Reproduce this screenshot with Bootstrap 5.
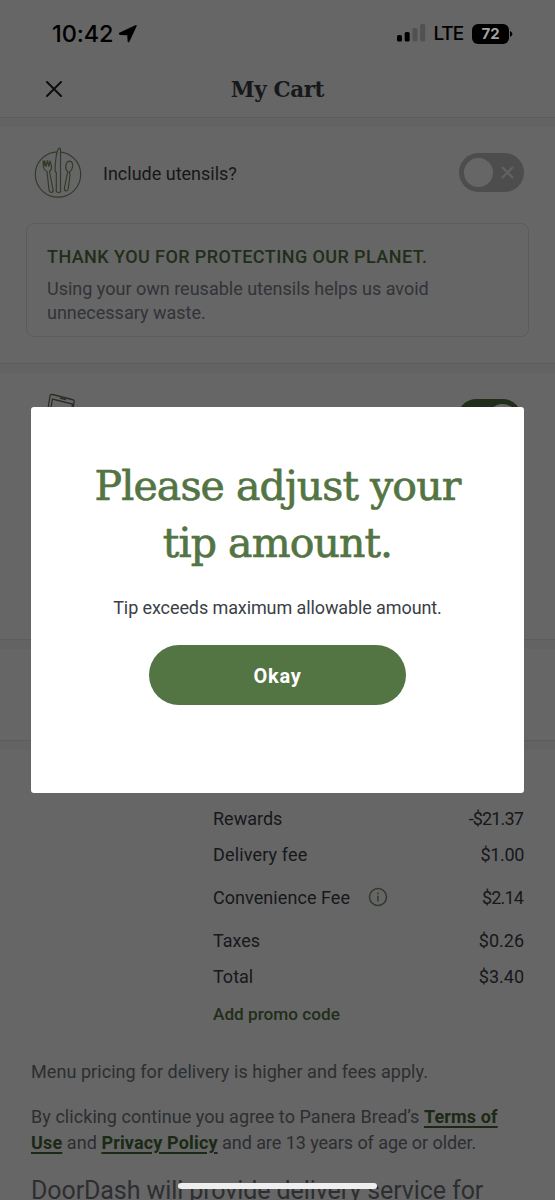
<!DOCTYPE html>
<html lang="en">
<head>
<meta charset="utf-8">
<meta name="viewport" content="width=device-width, initial-scale=1">
<title>My Cart</title>
<link href="https://cdn.jsdelivr.net/npm/bootstrap@5.3.0/dist/css/bootstrap.min.css" rel="stylesheet">
<style>
body{font-family:Roboto,"Liberation Sans",sans-serif;background:#fff;color:#3b3e46;font-size:18px;line-height:24px}
.phone{width:555px;height:1200px}
.status{height:62px;z-index:30;color:#000;font-family:Inter,sans-serif;padding:5px 42px 0 52px}
.clock{font-size:23.5px;font-weight:500;letter-spacing:-.1px}
.lte{font-size:19px;font-weight:500;letter-spacing:-1.1px;margin-left:7px}
.battery{width:37px;height:20px;border-radius:6px;background:#000;color:#a2a2a2;font-size:15px;font-weight:700;line-height:20px}
.topbar{margin-top:62px;height:55px}
.slab{font-family:"DejaVu Serif",serif}
.cart-title{font-size:21.5px;font-weight:700;line-height:30px;letter-spacing:-.4px;color:#3b3e46}
.close-x{left:46px;top:19px}
.band{height:10px;background:#f7f7f7;border-top:1px solid #e6e6e6;flex:none}
.green{color:#537443}
.toggle{width:65px;height:39px;border-radius:20px;background:#c0c0c0;padding:5px}
.toggle.is-on{background:#537443;margin-top:6px}
.toggle .knob{width:29px;height:29px;border-radius:50%;background:#fff}
.utensils{height:236px;padding:17px 31px 0}
.utensils-label{margin-left:18px;padding-top:3px}
.note{margin:23px -5px 0;height:114px;border:1.5px solid #e4e4e4;border-radius:8px;padding:21px 20px 0;color:#7d818c}
.note-title{font-weight:500;letter-spacing:.42px}
.summary{margin-left:213px;margin-right:31px;padding-top:57px}
.promo{font-weight:500;letter-spacing:0;font-size:17.2px;margin-top:13px}
.snug{letter-spacing:-.35px}
.snugger{letter-spacing:-.85px;margin-right:1px}
.legal{padding:0 31px;color:#70747c;margin-top:34px;letter-spacing:.06px}
.legal a{color:#466a35;font-weight:700;text-decoration-thickness:2px;text-underline-offset:3px;letter-spacing:.15px}
.age{letter-spacing:-.06px}
.door{font-size:25px;line-height:30px;white-space:nowrap;letter-spacing:-.09px}
.shade{background:rgba(0,0,0,.6);z-index:10}
.dialog-layer{z-index:20;padding:407px 31px 0}
.dialog-box{height:386px;border-radius:3px;border:0;padding-top:51px}
.dialog-title{font-size:41px;line-height:57px;font-weight:400;color:#537443;letter-spacing:-.9px;-webkit-text-stroke:.7px #537443}
.dialog-text{margin-top:24px;letter-spacing:-.1px}
.okay{width:257px;height:60px;background:#537443;color:#fff;font-weight:700;font-size:20px;letter-spacing:.7px;margin-top:25px;padding-top:8px}
.home{left:178px;top:1183px;width:199px;height:6px;z-index:30;background:#eee}
</style>
</head>
<body>
<main class="phone position-relative overflow-hidden">
  <div class="status position-absolute top-0 start-0 w-100 d-flex align-items-center">
    <span class="clock">10:42</span>
    <svg style="margin-left:5px" width="20" height="20" viewBox="0 0 20 20"><path d="M1.300 8.700 17.300 1.200q1.800-.6 1.200 1.200L11.500 17.600q-1.300 1.800-1.900-.3L9.300 11.200 2.500 10.900q-2.600-.6-1.200-2.200Z" fill="#000"/></svg>
    <svg class="ms-auto" width="29" height="19" viewBox="0 0 29 19"><g fill="#000"><rect y="11" width="5" height="6.500" rx="1.500"/><rect x="7.700" y="8" width="5" height="9.500" rx="1.500"/></g><g fill="#515151"><rect x="15.500" y="4" width="5" height="13.500" rx="1.500"/><rect x="23.200" y="0" width="5" height="17.500" rx="1.500"/></g></svg>
    <span class="lte">LTE</span>
    <span class="battery text-center" style="margin-left:9px">72</span>
    <svg width="4" height="8" viewBox="0 0 4 8"><path d="M1 1q5 3 0 6Z"/></svg>
  </div>

  <header class="topbar position-relative d-flex justify-content-center align-items-center">
    <svg class="close-x position-absolute" width="16" height="16" viewBox="0 0 16 16"><path d="M1 1 15 15M15 1 1 15" stroke="#202226" stroke-width="2" stroke-linecap="round"/></svg>
    <h1 class="cart-title slab mb-0">My Cart</h1>
  </header>
  <div class="band"></div>

  <section class="utensils">
    <div class="d-flex align-items-center">
      <svg width="54" height="56" viewBox="0 0 54 56" fill="none" stroke="#7c9469" stroke-width="1.200" stroke-linejoin="round">
        <circle cx="27" cy="30.500" r="22.700"/>
        <path fill="#fff" d="M25.300 46V28.500L24 27Q24.500 11 27 5.500 28.500 3 29.500 5V46Q30.500 48.500 27.500 48.500 24.800 48.500 25.300 46Z"/>
        <path fill="#fff" d="M12 17 12.500 23.500Q13 26 16 27.500L18 46Q18.500 48.500 20.500 48.500 22.500 48 22 45.500L18.500 27.500Q21 25.500 20.500 22L19 17 18 22.500 16.500 16.500 15 22.500 13.500 16.500 13 22Z"/>
        <path fill="#fff" d="M37 28Q34 25 34.700 21.500 35.700 17.200 39 17.200 42.200 18 41.500 23 41 26.500 38.500 28L39 31 37.300 44.500Q36.800 47 35 47 33 46.500 33.500 44L36 31Z"/>
      </svg>
      <span class="utensils-label">Include utensils?</span>
      <div class="toggle ms-auto d-flex align-items-center">
        <div class="knob"></div>
        <svg style="margin-left:8px" width="13" height="13" viewBox="0 0 13 13"><path d="M1 1 12 12M12 1 1 12" stroke="#f4f4f4" stroke-width="2.200"/></svg>
      </div>
    </div>
    <div class="note">
      <div class="note-title green">THANK YOU FOR PROTECTING OUR PLANET.</div>
      <p class="mb-0" style="margin-top:8px">Using your own reusable utensils helps us avoid<br>unnecessary waste.</p>
    </div>
  </section>
  <div class="band"></div>

  <section class="d-flex justify-content-between" style="height:266px;padding:20px 33px 0 45px">
    <svg width="32" height="50" viewBox="0 0 32 50" fill="none" stroke="#65725c" stroke-width="1.300"><path d="M2 22 5 3Q5.500 1 7.500 1.500L27 6.500Q30 7 29 9.500L26.500 28M5 20 7.500 6 27.500 11 26 20M15 5.200 21 6.700"/></svg>
    <div class="toggle is-on d-flex justify-content-end"><div class="knob"></div></div>
  </section>
  <div class="band"></div>
  <div style="height:91px"></div>
  <div class="band"></div>

  <section class="summary">
    <div class="d-flex justify-content-between"><span>Rewards</span><span class="snugger">-$21.37</span></div>
    <div class="d-flex justify-content-between" style="margin-top:12px"><span style="letter-spacing:.15px">Delivery fee</span><span class="snug">$1.00</span></div>
    <div class="d-flex justify-content-between align-items-center" style="margin-top:19px"><span style="letter-spacing:.06px">Convenience Fee</span>
      <svg class="me-auto" style="margin-left:18px;margin-top:-2px" width="20" height="20" viewBox="0 0 20 20" fill="none" stroke="#7b8f65" stroke-width="1.500"><circle cx="10" cy="10" r="8.500"/><path d="M10 8.800V14.500M10 5.500V7.300"/></svg><span class="snugger">$2.14</span></div>
    <div class="d-flex justify-content-between" style="margin-top:19px"><span>Taxes</span><span>$0.26</span></div>
    <div class="d-flex justify-content-between" style="margin-top:12px"><span>Total</span><span>$3.40</span></div>
    <div class="promo green">Add promo code</div>
  </section>

  <section class="legal">
    <p class="mb-0">Menu pricing for delivery is higher and fees apply.</p>
    <p class="mb-0" style="margin-top:20px;line-height:26px">By clicking continue you agree to Panera Bread’s <a href="#">Terms of</a><br><a href="#">Use</a> and <a href="#">Privacy Policy</a><span class="age"> and are 13 years of age or older.</span></p>
    <p class="door mb-0" style="margin-top:20px">DoorDash will provide delivery service for</p>
  </section>

  <div class="shade position-absolute top-0 start-0 w-100 h-100"></div>
  <div class="dialog-layer position-absolute top-0 start-0 w-100">
    <div class="dialog-box bg-white text-center" role="dialog">
      <h2 class="dialog-title slab mb-0">Please adjust your<br>tip amount.</h2>
      <p class="dialog-text mb-0">Tip exceeds maximum allowable amount.</p>
      <button class="btn okay rounded-pill border-0">Okay</button>
    </div>
  </div>
  <div class="home position-absolute rounded-pill"></div>
</main>
<script src="https://cdn.jsdelivr.net/npm/bootstrap@5.3.0/dist/js/bootstrap.bundle.min.js"></script>
</body>
</html>
